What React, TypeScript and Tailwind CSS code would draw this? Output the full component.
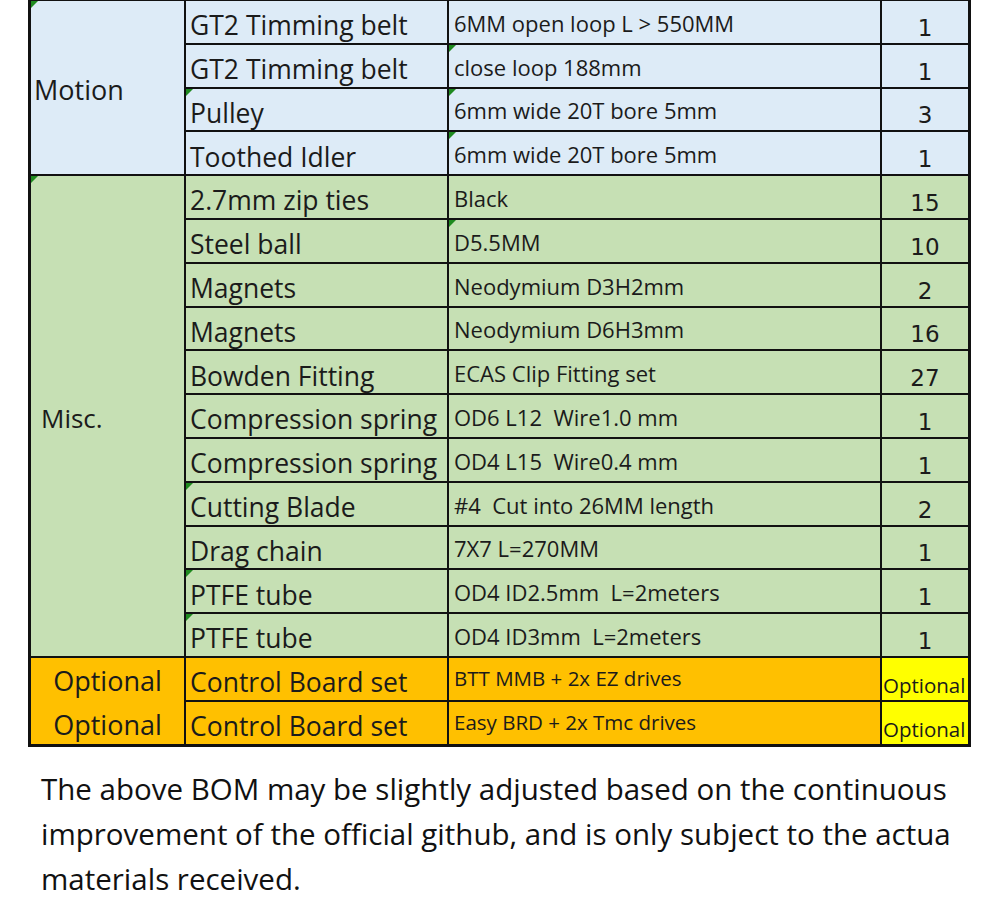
import React from "react";

type Row = { name: string; spec: string; qty: string; tri2?: boolean; tri3?: boolean };

const motion: Row[] = [
  { name: "GT2 Timming belt", spec: "6MM open loop L > 550MM", qty: "1" },
  { name: "GT2 Timming belt", spec: "close loop 188mm", qty: "1", tri3: true },
  { name: "Pulley", spec: "6mm wide 20T bore 5mm", qty: "3", tri2: true, tri3: true },
  { name: "Toothed Idler", spec: "6mm wide 20T bore 5mm", qty: "1", tri3: true },
];

const misc: Row[] = [
  { name: "2.7mm zip ties", spec: "Black", qty: "15" },
  { name: "Steel ball", spec: "D5.5MM", qty: "10", tri3: true },
  { name: "Magnets", spec: "Neodymium D3H2mm", qty: "2" },
  { name: "Magnets", spec: "Neodymium D6H3mm", qty: "16" },
  { name: "Bowden Fitting", spec: "ECAS Clip Fitting set", qty: "27" },
  { name: "Compression spring", spec: "OD6 L12  Wire1.0 mm", qty: "1" },
  { name: "Compression spring", spec: "OD4 L15  Wire0.4 mm", qty: "1" },
  { name: "Cutting Blade", spec: "#4  Cut into 26MM length", qty: "2", tri2: true },
  { name: "Drag chain", spec: "7X7 L=270MM", qty: "1" },
  { name: "PTFE tube", spec: "OD4 ID2.5mm  L=2meters", qty: "1", tri2: true },
  { name: "PTFE tube", spec: "OD4 ID3mm  L=2meters", qty: "1", tri2: true },
];

const optional = [
  { name: "Control Board set", spec: "BTT MMB + 2x EZ drives" },
  { name: "Control Board set", spec: "Easy BRD + 2x Tmc drives" },
];

const Tri = () => (
  <span className="absolute left-0 top-0 h-0 w-0 border-t-[7px] border-r-[7px] border-t-[#1f8a1f] border-r-transparent" />
);

function DataCells({ r, bg }: { r: Row; bg: string }) {
  return (
    <>
      <div className={`relative flex items-end pl-[4px] pb-[4px] text-[26.5px] leading-none whitespace-pre ${bg}`}>
        {r.tri2 && <Tri />}
        {r.name}
      </div>
      <div className={`relative flex items-end pl-[5px] pb-[9px] text-[22px] leading-none whitespace-pre ${bg}`}>
        {r.tri3 && <Tri />}
        {r.spec}
      </div>
      <div
        className={`flex items-end justify-center pb-[3px] text-[23px] leading-none ${bg}`}
        style={{ fontFamily: '"DejaVu Sans", sans-serif' }}
      >
        {r.qty}
      </div>
    </>
  );
}

export default function App() {
  const blue = "bg-[#DDEBF7]";
  const green = "bg-[#C6E0B4]";
  const orange = "bg-[#FFC000]";
  return (
    <div className="min-h-[919px] w-[1000px] bg-white text-[#1b1b1b]" style={{ fontFamily: '"Open Sans", sans-serif' }}>
      <div className="ml-[28px] grid w-[943px] grid-cols-[153px_261px_431px_86px] grid-rows-[repeat(17,41.8px)] gap-[2px] bg-[#111] pt-[1px] pr-[3px] pb-[3px] pl-[3px]">
        <div className={`relative row-span-4 flex items-center pl-[3px] pt-[4px] text-[27px] leading-none ${blue}`}>
          <Tri />
          Motion
        </div>
        {motion.map((r, i) => (
          <DataCells key={"m" + i} r={r} bg={blue} />
        ))}
        <div className={`relative row-span-11 flex items-center pl-[10px] pt-[4px] text-[26px] leading-none ${green}`}>
          <Tri />
          Misc.
        </div>
        {misc.map((r, i) => (
          <DataCells key={"x" + i} r={r} bg={green} />
        ))}
        <div className={`row-span-2 flex flex-col text-[27px] leading-none ${orange}`}>
          <div className="flex flex-1 items-end justify-center pb-[8px]">Optional</div>
          <div className="flex flex-1 items-end justify-center pb-[6px]">Optional</div>
        </div>
        {optional.map((o, i) => (
          <React.Fragment key={"o" + i}>
            <div className={`flex items-end pl-[4px] pb-[4px] text-[26.5px] leading-none whitespace-pre ${orange}`}>{o.name}</div>
            <div className={`flex items-end pl-[5px] pb-[11px] text-[20.5px] leading-none whitespace-pre ${orange}`}>{o.spec}</div>
            <div className="flex items-end pl-[1px] pb-[4px] text-[20.5px] leading-none bg-[#FFFF00]">Optional</div>
          </React.Fragment>
        ))}
      </div>
      <p className="mt-[19px] pl-[41px] text-[29.5px] leading-[45px] text-[#111] whitespace-nowrap">
        <span className="block">The above BOM may be slightly adjusted based on the continuous</span>
        <span className="block">improvement of the official github, and is only subject to the actua</span>
        <span className="block">materials received.</span>
      </p>
    </div>
  );
}
